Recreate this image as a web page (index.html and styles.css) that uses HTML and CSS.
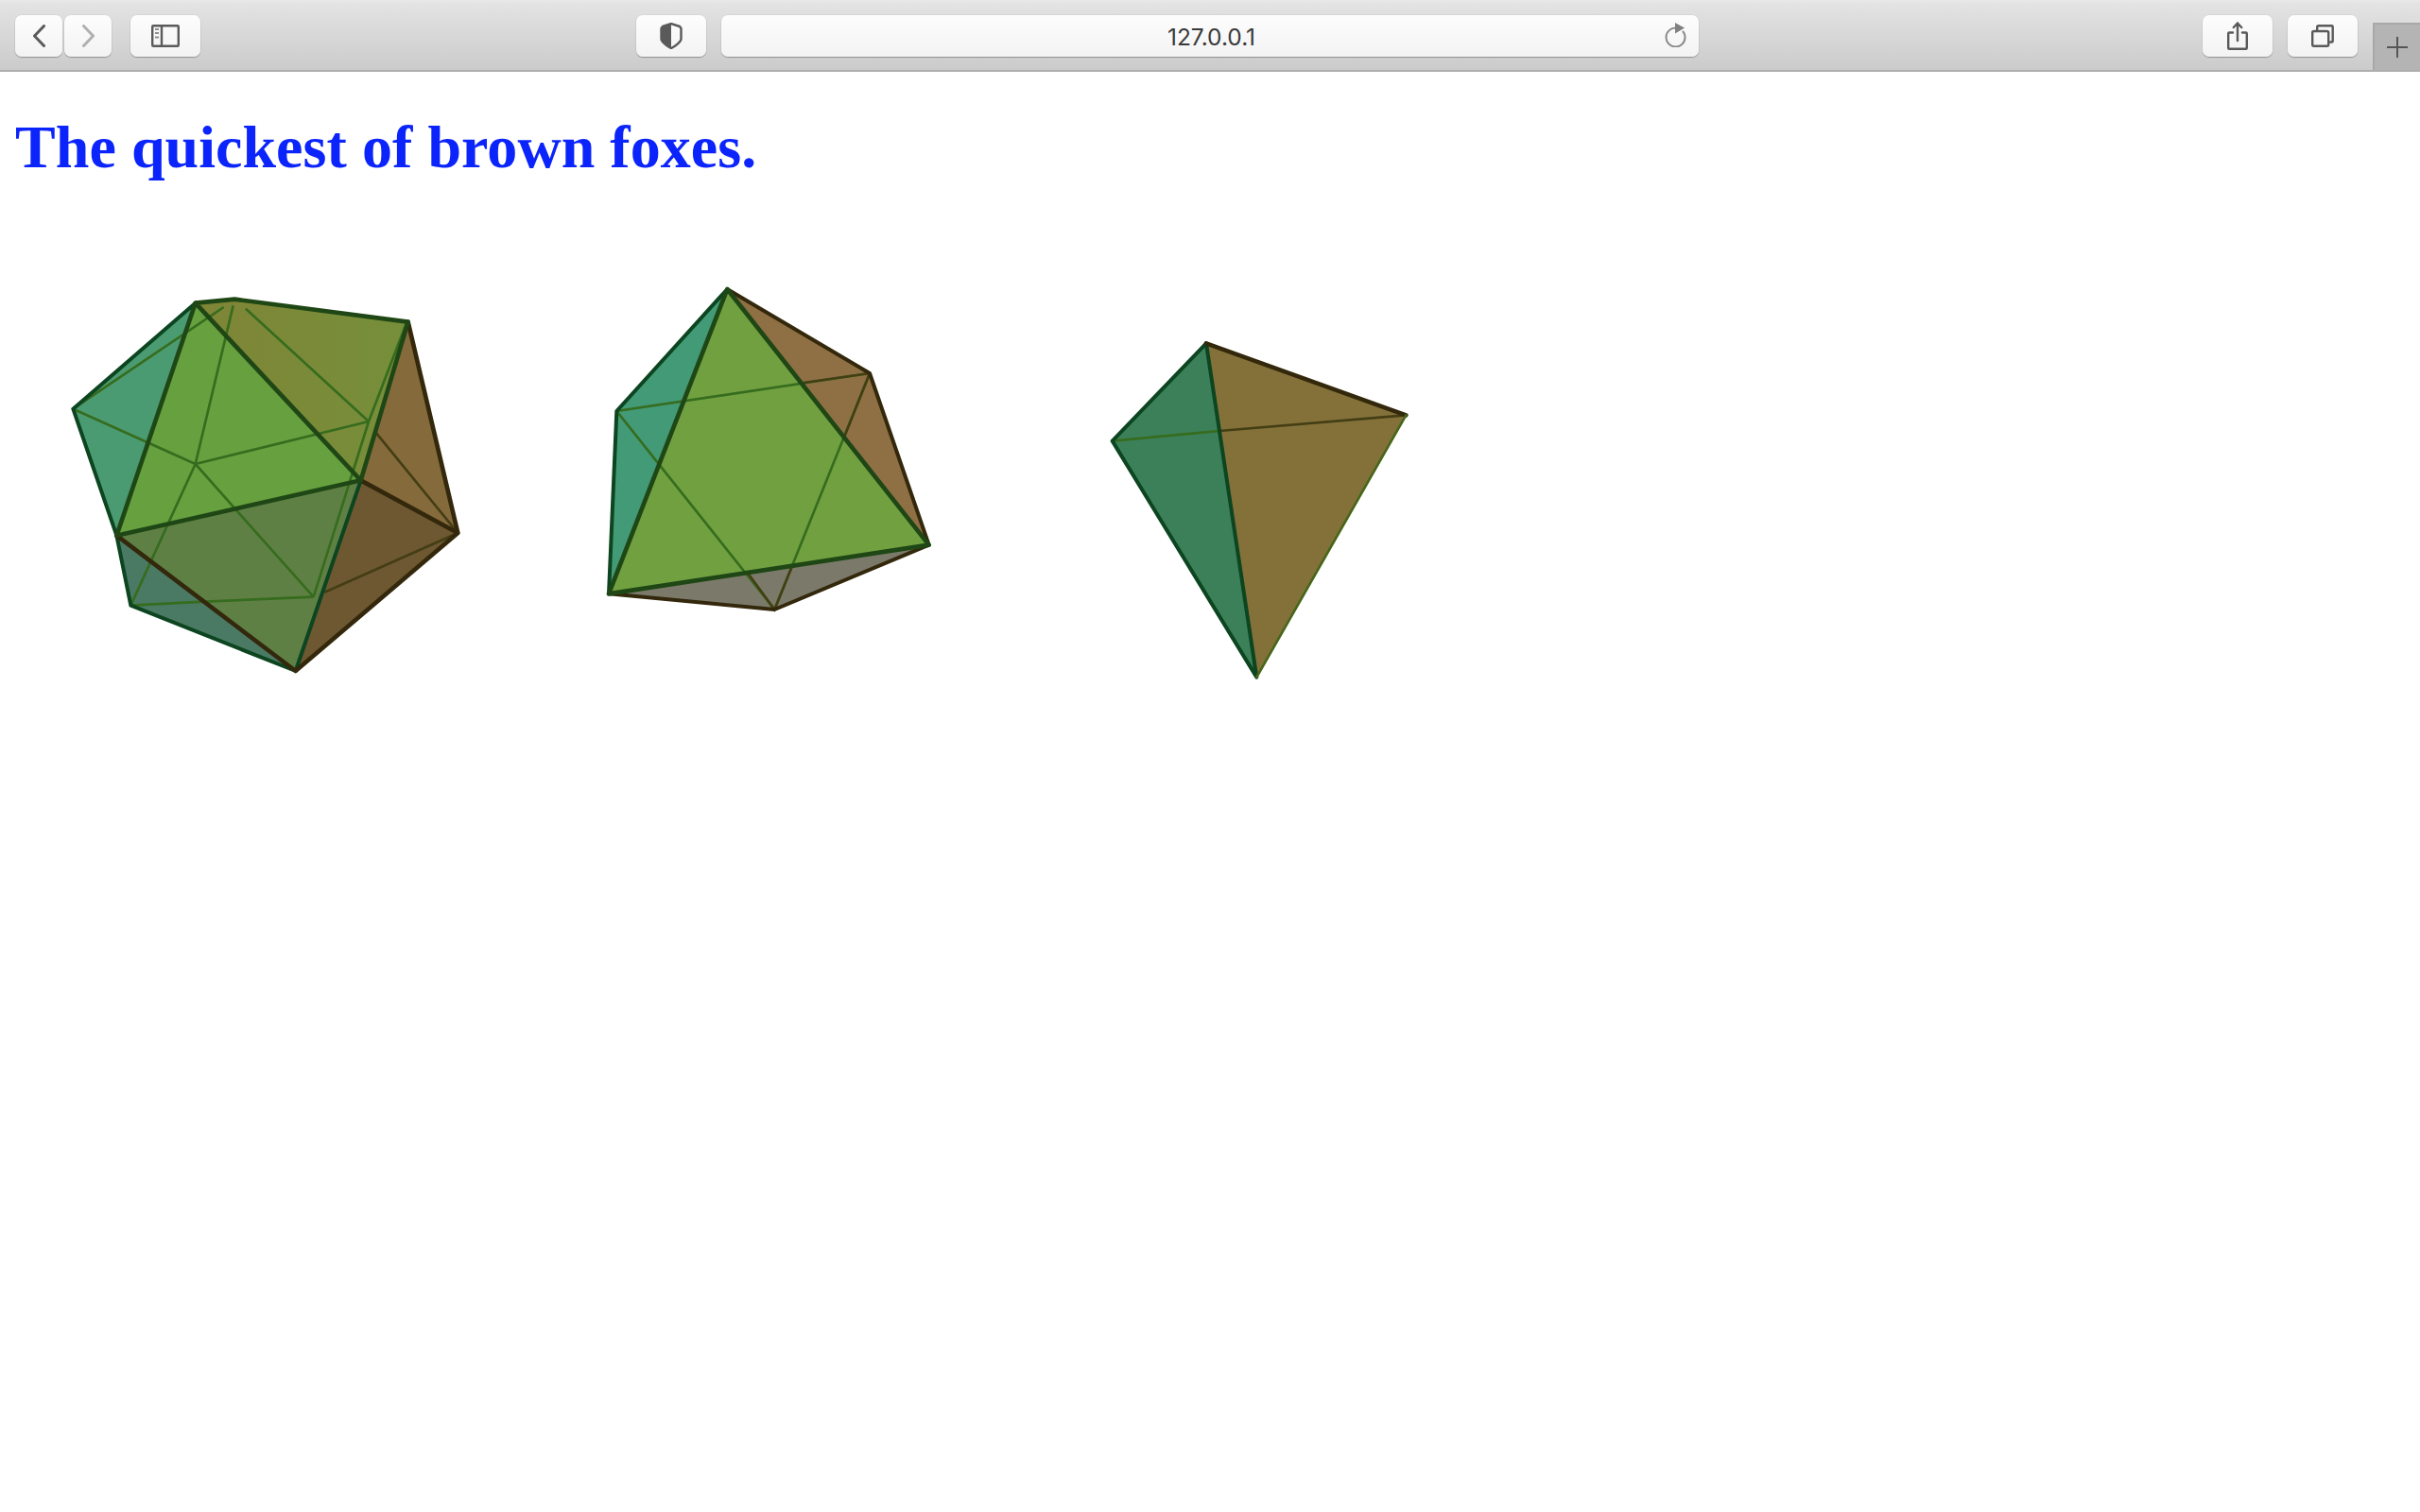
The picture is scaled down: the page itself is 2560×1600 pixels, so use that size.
FILE: index.html
```html
<!DOCTYPE html>
<html lang="en">
<head>
<meta charset="utf-8">
<title>127.0.0.1</title>
<link rel="stylesheet" href="styles.css">
</head>
<body>
<header class="toolbar">
  <button class="btn nav back"><svg class="icon" viewBox="0 0 13 24"><path d="M11.500 1.500 1.500 12l10 10.500" class="st"/></svg></button>
  <button class="btn nav fwd"><svg class="icon" viewBox="0 0 13 24"><path d="M1.500 1.500l10 10.500-10 10.500" class="st light"/></svg></button>
  <button class="btn side"><svg class="icon" viewBox="0 0 30 24"><rect x="1.200" y="1.200" width="27.600" height="21.600" rx="1" class="st thin"/><path d="M11 1v22" class="st thin"/><path d="M4 5h4M4 9h4M4 13.500h4" class="st thin mid"/></svg></button>
  <button class="btn shield"><svg class="icon" viewBox="0 0 24 28"><path d="M12 1 3 4 1.500 6v11c0 3 6 8 10.500 10 4.500-2 10.500-7 10.500-10V6L21 4z" class="st thin"/><path d="M12 1 3 4 1.500 6v11c0 3 6 8 10.500 10z" class="fillg"/></svg></button>
  <div class="url"><span class="addr">127.0.0.1</span><svg class="reload" viewBox="0 0 24 26"><path d="M13 5.500A10 10 0 1 0 22.500 15.500c0-2.300-.7-4.400-2-6" class="st thin grey"/><path d="M12 0l10 5.500-10 6z" class="fillgrey"/></svg></div>
  <button class="btn share"><svg class="icon" viewBox="0 0 22 30"><path d="M6 11.500H2.200a1 1 0 0 0-1 1v15.300a1 1 0 0 0 1 1h17.600a1 1 0 0 0 1-1V12.500a1 1 0 0 0-1-1H16M11 20V1.500M6.800 6 11 1.500 15.200 6" class="st thin"/></svg></button>
  <button class="btn tabs"><svg class="icon" viewBox="0 0 24 24"><rect x="1.200" y="7" width="17" height="15.800" rx="1.500" class="st thin"/><path d="M6.200 6V2.800a1.500 1.500 0 0 1 1.500-1.500h14a1 1 0 0 1 1 1V17.500a1 1 0 0 1-1 1H20" class="st thin"/></svg></button>
  <div class="newtab"><svg class="plus" viewBox="0 0 22 22"><path d="M11 0v22M0 11h22" class="st hair"/></svg></div>
</header>
<main class="page">
  <h1 class="title">The quickest of brown foxes.</h1>
  <div class="solids">
    <svg class="solid ico" viewBox="0 0 1380 1350" role="img" aria-label="Icosahedron">
      <defs>
        <linearGradient id="olive" x1="0" y1="0" x2="1" y2="0"><stop offset="0" stop-color="#7f8536"/><stop offset="1" stop-color="#768f3a"/></linearGradient>
      </defs>
      <polygon points="82,428 470,92 220,830" fill="#4b9b72"/>
      <polygon points="470,92 595,80 1145,152 995,655" fill="url(#olive)"/>
      <polygon points="1145,152 1303,822 995,655" fill="#856a3b"/>
      <polygon points="995,655 1303,822 788,1260" fill="#6e5831"/>
      <polygon points="220,830 995,655 788,1260" fill="#5f8045"/>
      <polygon points="220,830 788,1260 265,1052" fill="#4a7a64"/>
      <polygon points="470,92 220,830 995,655" fill="#67a03f"/>
      <path class="back-edges green" d="M82,428 470,603M82,428 560,105M590,100 470,603M470,603 1020,468M470,603 845,1025M470,603 265,1052M630,110 1020,468M1020,468 845,1025M845,1025 500,1040M265,1052 500,1040M1020,468 1140,155"/>
      <path class="back-edges brown" d="M1040,500 1303,822M880,1010 1303,822"/>
      <path class="edge mid dkgreen" d="M82,428 470,92M82,428 220,830 265,1052 788,1260M995,655 788,1260"/>
      <path class="edge umber" d="M220,830 788,1260 1303,822 1145,152M995,655 1303,822"/>
      <path class="edge olivebk" d="M470,92 995,655 220,830 470,92M470,92 595,80 1145,152 995,655"/>
    </svg>
    <svg class="solid octa" viewBox="0 0 1200 1140" role="img" aria-label="Octahedron">
      <polygon points="448,48 97,435 72,1015" fill="#429a76"/>
      <polygon points="448,48 900,315 1088,860" fill="#8f7044"/>
      <polygon points="72,1015 598,1065 1088,860" fill="#7b7a6a"/>
      <polygon points="448,48 72,1015 1088,860" fill="#70a040"/>
      <path class="back-edges green" d="M97,435 900,315M97,435 598,1065M900,315 598,1065"/>
      <path class="back-edges brown" d="M690,345 900,315M900,315 820,515M510,945 598,1065 655,925"/>
      <path class="edge mid umber" d="M448,48 900,315 1088,860 598,1065 72,1015"/>
      <path class="edge mid dkgreen" d="M448,48 97,435 72,1015"/>
      <path class="edge olivebk" d="M72,1015 448,48 1088,860 72,1015"/>
    </svg>
    <svg class="solid tetra" viewBox="0 0 1080 1200" role="img" aria-label="Tetrahedron">
      <polygon points="378,70 80,380 538,1130" fill="#3b8059"/>
      <polygon points="378,70 1012,298 538,1130" fill="#84713a"/>
      <path class="back-edges green" d="M80,380 420,348"/>
      <path class="back-edges brown" d="M420,348 1012,298"/>
      <path class="edge mid dkgreen" d="M80,380 378,70 538,1130 80,380"/>
      <path class="edge umber" d="M378,70 1012,298"/>
      <path class="edge mid olive-line" d="M1012,298 538,1130"/>
    </svg>
  </div>
</main>
</body>
</html>
```
FILE: styles.css
```css
* { box-sizing: border-box; }
html, body { margin: 0; background: #fff; }
body { width: 2560px; height: 1600px; overflow: hidden; }

.toolbar {
  display: flex;
  align-items: flex-start;
  height: 76px;
  padding: 16px 0 0 16px;
  background: linear-gradient(#e9e9e9, #e3e3e3 4px, #cbcbcb);
  border-bottom: 2px solid #aeaeae;
}
.btn, .url {
  height: 44px;
  padding: 0;
  display: flex;
  align-items: center;
  justify-content: center;
  background: linear-gradient(#fdfdfd, #f3f3f3);
  border: 0;
  border-radius: 7px;
  box-shadow: 0 1px 1px rgba(0,0,0,.28), 0 0 0 .5px rgba(0,0,0,.07);
}
.nav { width: 50px; }
.fwd { margin-left: 2px; }
.side { width: 74px; margin-left: 20px; }
.shield { width: 74px; margin-left: 461px; }
.url { width: 1034px; margin-left: 16px; position: relative; }
.share { width: 74px; margin-left: 533px; }
.tabs { width: 74px; margin-left: 16px; }
.newtab {
  width: 50px;
  height: 50px;
  margin: 8px 0 0 16px;
  background: #b4b4b4;
  border: solid #a8a8a8;
  border-width: 2px 0 0 2px;
  display: flex;
  align-items: center;
  justify-content: center;
}
.addr {
  font: 24.5px/46px Inter, "Liberation Sans", sans-serif;
  color: #3a3a3a;
  height: 46px;
  margin: 2px 0 0 3px;
}
.reload { position: absolute; right: 13px; top: 8px; width: 24px; height: 26px; }
.back .icon, .fwd .icon { width: 13px; height: 24px; }
.side .icon { width: 30px; height: 24px; }
.shield .icon { width: 24px; height: 28px; }
.share .icon { width: 22px; height: 30px; }
.tabs .icon { width: 24px; height: 24px; }
.plus { width: 22px; height: 22px; }

.st { fill: none; stroke: #5a5a5a; stroke-width: 3; stroke-linecap: round; stroke-linejoin: round; }
.st.light { stroke: #b0b0b0; }
.st.thin { stroke-width: 2.400; }
.st.mid { stroke: #8f8f8f; stroke-linecap: butt; stroke-width: 2; }
.st.grey { stroke: #8a8a8a; stroke-width: 2; }
.st.hair { stroke-width: 2; stroke: #555; stroke-linecap: butt; }
.fillg { fill: #5a5a5a; }
.fillgrey { fill: #808080; }

.page { padding: 0 16px; }
.title {
  margin: 43px 0 0;
  font: bold 64px/74px "Liberation Serif", "Times New Roman", serif;
  letter-spacing: .05px;
  color: #0b24fb;
}
.solids {
  display: flex;
  align-items: flex-start;
  margin: 97px 0 0 34px;
}
.solid { display: block; filter: blur(.7px); }
.ico { width: 460px; height: 450px; }
.octa { width: 400px; height: 380px; margin-left: 110px; }
.tetra { width: 360px; height: 400px; margin: 50px 0 0 130px; }

.back-edges { fill: none; stroke-width: 8; }
.back-edges.green { stroke: #366c1e; }
.back-edges.brown { stroke: #443e14; }
.edge { fill: none; stroke-width: 14; stroke-linejoin: round; stroke-linecap: round; }
.edge.mid { stroke-width: 12; }
.edge.dkgreen { stroke: #0c4520; }
.edge.olivebk { stroke: #1f4715; }
.edge.umber { stroke: #33280c; }
.edge.olive-line { stroke: #46661a; stroke-width: 8; }
```
